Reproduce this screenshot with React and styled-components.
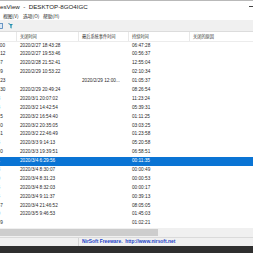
import React from "react";
import styled, { createGlobalStyle } from "styled-components";

const Global = createGlobalStyle`
  html, body { margin: 0; padding: 0; background: #ffffff; overflow: hidden; }
  #root { width: 253px; height: 253px; }
`;

const Screen = styled.div`
  width: 253px;
  height: 253px;
  display: flex;
  flex-direction: column;
  overflow: hidden;
  font-family: "Liberation Sans", "Noto Sans CJK SC", sans-serif;
  color: #111;
`;

const TitleBar = styled.div`
  height: 11px;
  box-sizing: border-box;
  border-top: 1px solid #b9b9b9;
  background: #ffffff;
  display: flex;
  align-items: center;
  flex: none;
`;

const TitleText = styled.span`
  font-size: 6.2px;
  color: #1a1a1a;
  white-space: pre;
  margin-top: 1px;
`;

const MinDash = styled.span`
  margin-left: auto;
  width: 4px;
  height: 1px;
  background: #444;
  margin-top: 1px;
`;

const MenuBar = styled.div`
  height: 9px;
  background: #ffffff;
  display: flex;
  align-items: center;
  gap: 5px;
  padding-left: 3px;
  flex: none;
`;

const MenuItem = styled.span`
  font-family: "Noto Sans CJK SC", sans-serif;
  font-size: 4.8px;
  color: #222;
  white-space: nowrap;
  width: 15px;
`;

const Toolbar = styled.div`
  height: 12px;
  box-sizing: border-box;
  background: #f0f0f0;
  border-bottom: 1px solid #dcdcdc;
  display: flex;
  align-items: center;
  gap: 5px;
  flex: none;
`;

const ToolIcon = styled.svg`
  width: 6px;
  height: 6px;
  flex: none;
  margin-left: ${(p) => p.$offset || 0}px;
`;

const ListArea = styled.div`
  flex: none;
  height: 196px;
  overflow: hidden;
  background: #ffffff;
`;

const Table = styled.div`
  margin-left: -38px;
  display: flex;
  flex-direction: column;
`;

const cols = "55px 62px 50px 61px 200px";

const HeaderRow = styled.div`
  display: grid;
  grid-template-columns: ${cols};
  height: 9.5px;
  box-sizing: border-box;
  border-bottom: 1px solid #ececec;
  background: #ffffff;
`;

const HeaderCell = styled.div`
  font-family: "Noto Sans CJK SC", sans-serif;
  font-size: 4.2px;
  line-height: 8.5px;
  color: #333;
  padding-left: 3px;
  white-space: nowrap;
  overflow: hidden;
  border-right: 1px solid #e8e8e8;
`;

const Row = styled.div`
  display: grid;
  grid-template-columns: ${cols};
  height: 8.9px;
  background: ${(p) => (p.$selected ? "#0a74d4" : "transparent")};
  color: ${(p) => (p.$selected ? "#ffffff" : "#2a2a2a")};
`;

const Cell = styled.div`
  font-size: 4.7px;
  line-height: 8.9px;
  padding-left: 3px;
  padding-right: 2px;
  white-space: nowrap;
  overflow: hidden;
`;

const HScroll = styled.div`
  flex: none;
  height: 9px;
  background: #f0f0f0;
  display: flex;
  align-items: center;
`;

const Thumb = styled.div`
  height: 7px;
  width: 158px;
  background: #cdcdcd;
`;

const StatusBar = styled.div`
  flex: none;
  height: 9px;
  box-sizing: border-box;
  background: #f0f0f0;
  border-top: 1px solid #dadada;
  display: grid;
  grid-template-columns: 79px 1fr;
`;

const StatusPanel = styled.div`
  border-right: ${(p) => (p.$divider ? "1px solid #d4d4d4" : "none")};
  padding-left: 3px;
  font-size: 4.9px;
  line-height: 8px;
  font-weight: bold;
  color: #2040c8;
  white-space: pre;
`;

const Desk = styled.div`
  flex: 1;
  background: #2f2f2f;
`;

const rows = [
  ["2020/2/27 11:56:00", "2020/2/27 18:43:28", "", "06:47:28"],
  ["2020/2/27 18:57:12", "2020/2/27 19:53:46", "", "00:56:37"],
  ["2020/2/28 8:57:37", "2020/2/28 21:52:41", "", "12:55:04"],
  ["2020/2/29 8:42:49", "2020/2/29 10:53:22", "", "02:10:34"],
  ["2020/2/29 10:54:23", "", "2020/2/29 12:00...", "01:05:37"],
  ["2020/2/29 12:22:30", "2020/2/29 20:49:24", "", "08:26:54"],
  ["2020/3/1 8:43:48", "2020/3/1 20:07:02", "", "11:23:24"],
  ["2020/3/2 9:03:23", "2020/3/2 14:42:54", "", "05:39:31"],
  ["2020/3/2 15:43:15", "2020/3/2 16:54:40", "", "01:11:25"],
  ["2020/3/2 17:31:40", "2020/3/2 20:35:05", "", "03:03:25"],
  ["2020/3/2 21:22:51", "2020/3/2 22:46:49", "", "01:23:58"],
  ["2020/3/3 3:53:15", "2020/3/3 9:14:13", "", "05:20:58"],
  ["2020/3/3 12:41:00", "2020/3/3 19:39:51", "", "06:58:51"],
  ["2020/3/4 6:18:21", "2020/3/4 6:29:56", "", "00:11:35"],
  ["2020/3/4 8:29:18", "2020/3/4 8:30:07", "", "00:00:49"],
  ["2020/3/4 8:30:30", "2020/3/4 8:31:23", "", "00:00:53"],
  ["2020/3/4 8:31:46", "2020/3/4 8:32:03", "", "00:00:17"],
  ["2020/3/4 8:32:24", "2020/3/4 9:11:37", "", "00:39:13"],
  ["2020/3/4 13:41:47", "2020/3/4 21:46:52", "", "08:05:05"],
  ["2020/3/5 8:01:50", "2020/3/5 9:46:53", "", "01:45:03"],
  ["2020/3/5 10:04:39", "", "", "01:02:21"],
];

export default function App() {
  return (
    <Screen>
      <Global />
      <TitleBar>
        <TitleText>esView  -  DESKTOP-8GO4IGC</TitleText>
        <MinDash />
      </TitleBar>
      <MenuBar>
        <MenuItem>视图(V)</MenuItem>
        <MenuItem>选项(O)</MenuItem>
        <MenuItem>帮助(H)</MenuItem>
      </MenuBar>
      <Toolbar>
        <ToolIcon viewBox="0 0 6 6" $offset={-3}>
          <rect x="0.5" y="0.5" width="5" height="5" fill="#dce8f4" stroke="#4a7fb8" strokeWidth="0.8" />
        </ToolIcon>
        <ToolIcon viewBox="0 0 6 6">
          <path d="M1 1 H5 L3.6 2.6 V5.6 L2.4 5 V2.6 Z" fill="#1f8fb0" />
          <path d="M0.4 0.6 L1.6 0.6" stroke="#1f6f9a" strokeWidth="0.8" />
        </ToolIcon>
      </Toolbar>
      <ListArea>
        <Table>
          <HeaderRow>
            <HeaderCell>开机时间</HeaderCell>
            <HeaderCell>关闭时间</HeaderCell>
            <HeaderCell>最后系统事件时间</HeaderCell>
            <HeaderCell>持续时间</HeaderCell>
            <HeaderCell>关闭的原因</HeaderCell>
          </HeaderRow>
          {rows.map((r, i) => (
            <Row key={i} $selected={i === 13}>
              <Cell>{r[0]}</Cell>
              <Cell>{r[1]}</Cell>
              <Cell>{r[2]}</Cell>
              <Cell>{r[3]}</Cell>
              <Cell />
            </Row>
          ))}
        </Table>
      </ListArea>
      <HScroll>
        <Thumb />
      </HScroll>
      <StatusBar>
        <StatusPanel $divider />
        <StatusPanel>NirSoft Freeware.  http://www.nirsoft.net</StatusPanel>
      </StatusBar>
      <Desk />
    </Screen>
  );
}
